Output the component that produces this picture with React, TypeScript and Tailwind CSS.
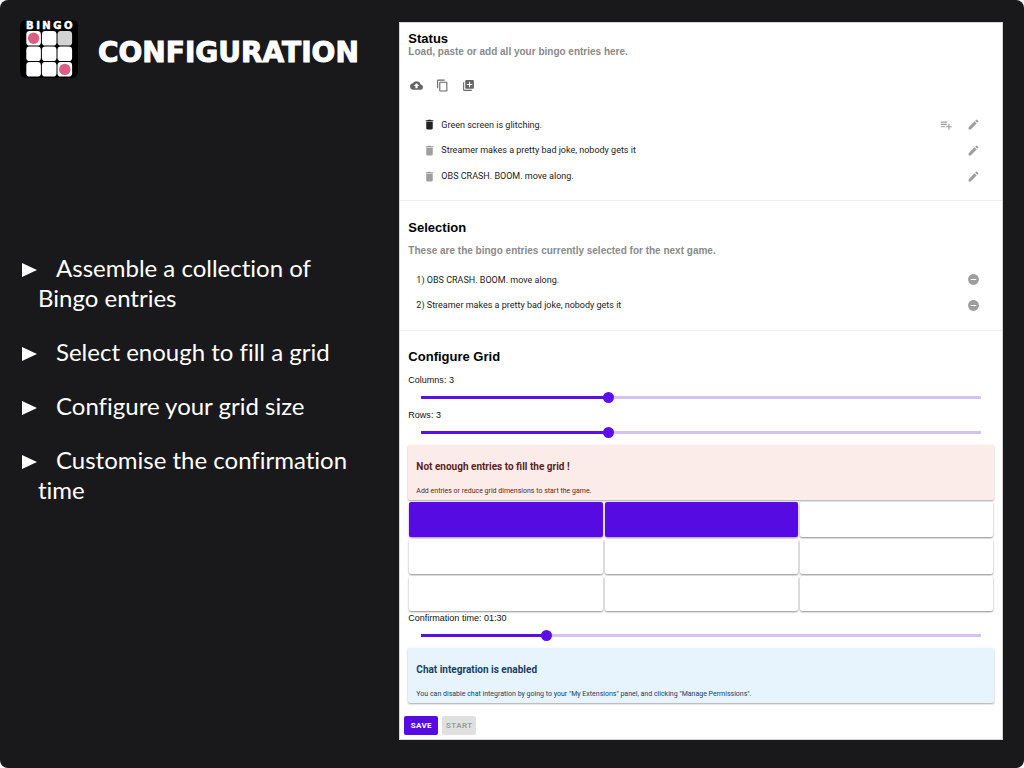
import { useState } from "react";
import type { ReactNode } from "react";
import {
  MdAddToPhotos,
  MdBackup,
  MdContentCopy,
  MdDelete,
  MdEdit,
  MdPlaylistAdd,
  MdRemoveCircle,
} from "react-icons/md";

const FEATURES = [
  "Assemble a collection of Bingo entries",
  "Select enough to fill a grid",
  "Configure your grid size",
  "Customise the confirmation time",
];

const ENTRIES = [
  { text: "Green screen is glitching.", selected: false },
  { text: "Streamer makes a pretty bad joke, nobody gets it", selected: true },
  { text: "OBS CRASH. BOOM. move along.", selected: true },
];

const SELECTION = [
  "OBS CRASH. BOOM. move along.",
  "Streamer makes a pretty bad joke, nobody gets it",
];

function Logo() {
  return (
    <svg viewBox="0 0 58 58" className="size-[58px] shrink-0" role="img" aria-label="Bingo">
      <rect width="58" height="58" rx="6" fill="#000" />
      <text
        x="30.5"
        y="9"
        textAnchor="middle"
        fontSize="10"
        fontWeight="900"
        letterSpacing="2.5"
        fontFamily="'DejaVu Sans', sans-serif"
        fill="#fff"
        stroke="#fff"
        strokeWidth="0.5"
      >
        BINGO
      </text>
      {[0, 1, 2].map((row) =>
        [0, 1, 2].map((col) => (
          <rect
            key={`${row}-${col}`}
            x={6.3 + col * 15.6}
            y={11 + row * 15.5}
            width="14.6"
            height="14.6"
            rx="3.4"
            fill={row === 0 && col === 2 ? "#d3d3d3" : "#fff"}
          />
        )),
      )}
      <circle cx="13.6" cy="18.3" r="5.7" fill="#db5f85" />
      <circle cx="44.8" cy="49.4" r="5.7" fill="#db5f85" />
    </svg>
  );
}

function IconButton({ label, className, children }: { label: string; className: string; children: ReactNode }) {
  return (
    <button type="button" aria-label={label} className={`flex shrink-0 items-center justify-center ${className}`}>
      {children}
    </button>
  );
}

function Slider(props: {
  id: string;
  label: string;
  min: number;
  max: number;
  step?: number;
  value: number;
  display: string;
  onChange: (value: number) => void;
}) {
  const percent = ((props.value - props.min) / (props.max - props.min)) * 100;
  return (
    <div className="flex h-[35px] flex-col px-2">
      <label htmlFor={props.id} className="text-[9px] leading-[12px] text-[#111]">
        {props.label}: {props.display}
      </label>
      <div className="px-2 pt-1">
        <input
          id={props.id}
          type="range"
          min={props.min}
          max={props.max}
          step={props.step ?? 1}
          value={props.value}
          onChange={(e) => props.onChange(Number(e.target.value))}
          style={{
            backgroundImage: `linear-gradient(to right, #5b0ee6 ${percent}%, #d4c2f7 ${percent}%)`,
          }}
          className="block h-[15px] w-full cursor-pointer appearance-none bg-[length:calc(100%-10px)_3px] bg-center bg-no-repeat [&::-webkit-slider-thumb]:size-[11px] [&::-webkit-slider-thumb]:appearance-none [&::-webkit-slider-thumb]:rounded-full [&::-webkit-slider-thumb]:bg-[#5b0ee6]"
        />
      </div>
    </div>
  );
}

function Alert({ title, tone, children }: { title: string; tone: string; children: ReactNode }) {
  return (
    <div className={`mx-2 rounded-xs px-2 pt-[15px] pb-1 font-[Roboto,sans-serif] shadow-[0_1px_2px_rgba(0,0,0,0.35)] ${tone}`}>
      <h3 className="text-[10px] leading-[14px] font-bold">{title}</h3>
      <p className="mt-3 text-[7px] leading-[10px]">{children}</p>
    </div>
  );
}

export default function App() {
  const [columns, setColumns] = useState(3);
  const [rows, setRows] = useState(3);
  const [seconds, setSeconds] = useState(90);
  const time = `${String(Math.floor(seconds / 60)).padStart(2, "0")}:${String(seconds % 60).padStart(2, "0")}`;

  return (
    <div className="bg-white">
      <div className="flex min-h-screen rounded-lg bg-[#19191b]">
        <aside className="flex w-[39%] shrink-0 flex-col text-white">
          <header className="flex items-center gap-5 pt-5 pl-5">
            <Logo />
            <h1 className="pt-2 font-['DejaVu_Sans',sans-serif] text-[28px] leading-[30px] font-bold [-webkit-text-stroke:1px_white]">
              CONFIGURATION
            </h1>
          </header>
          <ul className="mt-[175px] flex flex-col gap-6 pr-9 pl-[38px] font-[Lato,sans-serif] text-2xl leading-[30px] [font-variant-ligatures:none]">
            {FEATURES.map((text) => (
              <li key={text} className="-indent-4 leading-[30px]">
                <svg viewBox="0 0 15 14" className="mr-[19px] inline h-[14px] w-[15px] align-baseline" aria-hidden="true">
                  <path d="M0 0 15 7 0 14Z" fill="#fff" />
                </svg>
                {text}
              </li>
            ))}
          </ul>
        </aside>

        <main className="my-[22px] mr-[21px] min-w-0 flex-1 self-start border border-[#d5d5d8] bg-white pb-1 font-['Liberation_Sans',Arial,sans-serif] text-black">
          <section className="border-b border-[#ededed] pt-[9px] pb-[11px]">
            <h2 className="px-2 text-[13px] leading-[14px] font-bold">Status</h2>
            <p className="px-2 text-[10px] leading-[12px] font-bold text-[#8a8a8a]">
              Load, paste or add all your bingo entries here.
            </p>
            <div className="mt-5 flex gap-3 px-[9px] text-[#666]">
              <IconButton label="Load entries" className="size-[14px]"><MdBackup size={13} /></IconButton>
              <IconButton label="Paste entries" className="size-[14px]"><MdContentCopy size={13} /></IconButton>
              <IconButton label="Add entry" className="size-[14px]"><MdAddToPhotos size={13} /></IconButton>
            </div>
            <ul className="mt-5 grid h-[77px] auto-rows-fr px-[22px] font-[Roboto,sans-serif] text-[#222]">
              {ENTRIES.map((entry) => (
                <li key={entry.text} className="flex items-center">
                  <IconButton label="Delete entry" className={entry.selected ? "size-[14px] text-[#9e9e9e]" : "size-[14px] text-[#222]"}>
                    <MdDelete size={13} />
                  </IconButton>
                  <span className="ml-[5px] flex-1 text-[9px] leading-[12px]">{entry.text}</span>
                  {!entry.selected && (
                    <IconButton label="Select entry" className="mr-[13px] size-[14px] text-[#9e9e9e]">
                      <MdPlaylistAdd size={14} />
                    </IconButton>
                  )}
                  <IconButton label="Edit entry" className="size-[14px] text-[#9e9e9e]"><MdEdit size={13} /></IconButton>
                </li>
              ))}
            </ul>
          </section>

          <section className="border-b border-[#f1f1f1] pt-5 pb-3">
            <h2 className="px-2 text-[13px] leading-[14px] font-bold">Selection</h2>
            <p className="mt-[10px] px-2 text-[10px] leading-[12px] font-bold text-[#8a8a8a]">
              These are the bingo entries currently selected for the next game.
            </p>
            <ol className="mt-[10px] grid h-[51px] auto-rows-fr pr-[22px] pl-4 font-[Roboto,sans-serif] text-[#222]">
              {SELECTION.map((text, index) => (
                <li key={text} className="flex items-center">
                  <span className="flex-1 text-[9px] leading-[12px]">{index + 1}) {text}</span>
                  <IconButton label="Remove entry" className="size-[14px] text-[#9e9e9e]"><MdRemoveCircle size={13} /></IconButton>
                </li>
              ))}
            </ol>
          </section>

          <section className="pt-[19px]">
            <h2 className="mb-[10px] px-2 text-[13px] leading-[14px] font-bold">Configure Grid</h2>
            <Slider id="columns" label="Columns" min={1} max={7} value={columns} display={String(columns)} onChange={setColumns} />
            <Slider id="rows" label="Rows" min={1} max={7} value={rows} display={String(rows)} onChange={setRows} />
            <div className="pt-px">
              <Alert title="Not enough entries to fill the grid !" tone="bg-[#fbece9] text-[#5c1f1c]">
                Add entries or reduce grid dimensions to start the game.
              </Alert>
            </div>
            <div
              className="grid gap-[2px] px-[9px] pt-[2px] pb-px"
              style={{ gridTemplateColumns: `repeat(${columns}, minmax(0, 1fr))` }}
            >
              {Array.from({ length: columns * rows }, (_, index) => (
                <div
                  key={index}
                  className={
                    index < SELECTION.length
                      ? "h-[35px] rounded-xs bg-[#560be2] shadow-[0_1px_2px_rgba(86,11,226,0.5)]"
                      : "h-[35px] rounded-xs bg-white shadow-[0_1px_2px_rgba(0,0,0,0.45)]"
                  }
                />
              ))}
            </div>
            <Slider id="confirmation" label="Confirmation time" min={30} max={300} step={10} value={seconds} display={time} onChange={setSeconds} />
            <div className="pt-px">
              <Alert title="Chat integration is enabled" tone="bg-[#e7f4fe] text-[#163f66]">
                You can disable chat integration by going to your "My Extensions" panel, and clicking "Manage Permissions".
              </Alert>
            </div>
          </section>

          <div className="mt-[13px] flex gap-1 px-1 font-[Roboto,sans-serif] text-[8px] font-bold tracking-wider">
            <button type="button" className="h-[19px] w-[34px] rounded-xs bg-[#560be2] text-white">SAVE</button>
            <button type="button" disabled className="h-[19px] w-[34px] rounded-xs bg-[#e0e0e0] text-[#9e9e9e]">START</button>
          </div>
        </main>
      </div>
    </div>
  );
}
